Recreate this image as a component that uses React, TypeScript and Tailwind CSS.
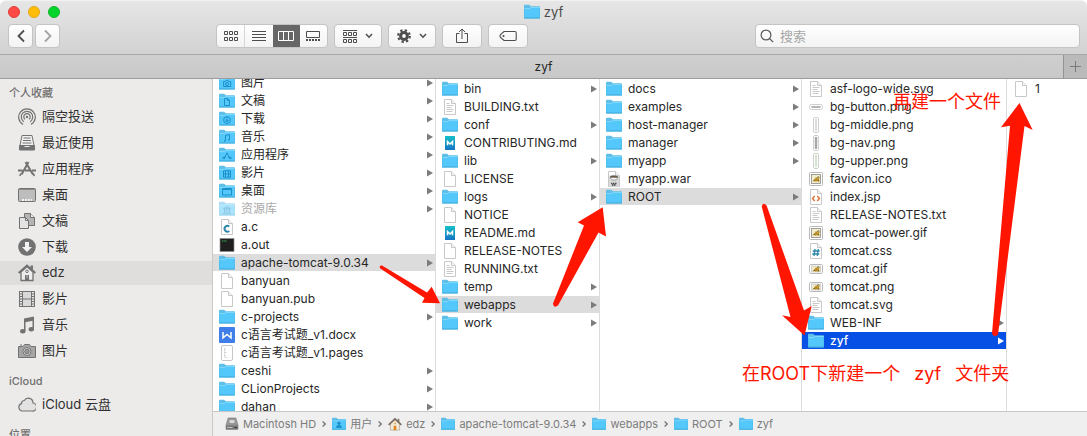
import React from "react";

type IconKind =
  | "folder" | "f-camera" | "f-doc" | "f-download" | "f-music" | "f-apps" | "f-film" | "f-desktop" | "f-library" | "f-user"
  | "c" | "exec" | "blank" | "text" | "word" | "pages" | "md" | "jar" | "hbar" | "vbar" | "vbar-dark" | "vbar-green"
  | "pic" | "pic-wide" | "jsp" | "css" | "drive" | "house";

const Page = ({ children }: { children?: React.ReactNode }) => (
  <g>
    <path d="M2.5.5h7l4 4v11h-11z" fill="#fff" stroke="#c8c8c8" />
    <path d="M9.5.5v4h4" fill="#f4f4f4" stroke="#c8c8c8" />
    {children}
  </g>
);

const folderGlyphs: Record<string, React.ReactNode> = {
  "f-camera": <><path d="M4.5 6.5h2l.6-1h2l.6 1h2v5h-7z" /><circle cx="8" cy="9" r="1.5" /></>,
  "f-doc": <path d="M5.5 5.5h3l2 2v5h-5zM8.5 5.5v2h2" />,
  "f-download": <><circle cx="8" cy="9" r="3.4" /><path d="M8 6.5v4M6.2 9L8 10.8 9.8 9" /></>,
  "f-music": <><path d="M6.5 11.5v-5l4-1v5" /><path d="M5.2 11.8h1.3M9.2 10.8h1.3" strokeWidth="1.8" /></>,
  "f-apps": <path d="M5 12.2l3-6.4 3 6.4M3.5 10.3h3.2M9.3 10.3h3.2M3.6 12l.7-1M12.4 12l-.7-1" />,
  "f-film": <path d="M4.5 5.8h7v6.4h-7zM4.5 9h7M6.5 5.8v6.4M9.5 5.8v6.4" />,
  "f-desktop": <path d="M3.5 5.5h9v6.5h-9zM3.5 6.5h9" />,
  "f-library": <path d="M4.5 7.8L8 5.5l3.5 2.3zM5.5 8v3.5M8 8v3.5M10.5 8v3.5M4 12.3h8" />,
  "f-user": <><circle cx="8" cy="7.2" r="1.4" fill="#1a8fc9" /><path d="M5.2 12c.2-2 1.2-2.5 2.8-2.5s2.6.5 2.8 2.5z" fill="#1a8fc9" /></>,
};

function FileIcon({ kind, className = "size-4" }: { kind: IconKind; className?: string }) {
  let body: React.ReactNode = null;
  if (kind.startsWith("f")) {
    body = (
      <g opacity={kind === "f-library" ? 0.5 : 1}>
        <path d="M0 3.200V1.700q0-.9.9-.9h4q.5 0 .9.5l.9.900H15q1 0 1 .9V6H0z" fill="#5fbfe8" />
        <path d="M0 4h5.600l1.200-1H16V13.800q0 .7-.7.7H.7Q0 14.500 0 13.800z" fill="#55c8fb" />
        <path d="M0 4.500h5.800l1.200-1H16" fill="none" stroke="#8bdafc" strokeWidth=".8" />
        <path d="M.2 14h15.600" stroke="#3aa6d3" strokeWidth=".9" />
        <path d="M.3 4v10M15.700 4v10" stroke="#4ab3de" strokeWidth=".5" />
        <g fill="none" stroke="#1a8fc9" strokeWidth="1">{folderGlyphs[kind]}</g>
      </g>
    );
  } else if (kind === "blank") body = <Page />;
  else if (kind === "text") body = <Page><path d="M4.500 4.500h3M4.500 6.500h7M4.500 8.500h5M4.500 10.500h7M4.500 12.500h6" stroke="#c9c9c9" /></Page>;
  else if (kind === "c") body = <Page><path d="M10.300 7.500A2.900 2.900 0 1 0 10.300 12" fill="none" stroke="#2d86ab" strokeWidth="1.900" /></Page>;
  else if (kind === "jsp") body = <Page><path d="M6.700 7L4.500 9.500l2.200 2.500M9.300 7l2.200 2.500L9.300 12" fill="none" stroke="#e06a2c" strokeWidth="1.300" /></Page>;
  else if (kind === "css") body = <Page><path d="M7 6l-1 7M10.300 6l-1 7M4.700 8h7M4.300 11h7" stroke="#2d86ab" strokeWidth="1.300" /></Page>;
  else if (kind === "exec")
    body = <><rect x="1" y="1.500" width="14" height="13" fill="#1f1f1f" stroke="#8d8d8d" strokeWidth=".7" /><path d="M3 4h5" stroke="#36b35a" strokeDasharray="1.500 .6" /></>;
  else if (kind === "word")
    body = <><rect width="16" height="16" rx="1" fill="#3f7de8" /><path d="M4 5v5.800L8 7.500l4 3.300V5" fill="none" stroke="#fff" strokeWidth="1.500" /></>;
  else if (kind === "pages")
    body = <><rect x="2.500" y=".5" width="11" height="15" rx="1.500" fill="#fff" stroke="#c6c6c6" /><path d="M5.500 2.500v10M5 4.500h2M5 7.500h3M5 10.500h2M5.500 12.500h3" stroke="#d5d5d5" strokeWidth=".8" fill="none" /></>;
  else if (kind === "md")
    body = (
      <>
        <defs><linearGradient id="mdg" x2="0" y2="1"><stop stopColor="#16c0c8" /><stop offset="1" stopColor="#1673c4" /></linearGradient></defs>
        <rect x="3" y="1" width="10" height="14" fill="url(#mdg)" />
        <path d="M5.500 10.300V6.500L8 9l2.500-2.500v3.800" fill="none" stroke="#fff" strokeWidth="1.500" />
      </>
    );
  else if (kind === "jar")
    body = <Page><path d="M3 4.500h10v11H3z" fill="#d9d9d9" /><ellipse cx="8" cy="6" rx="3.800" ry="1.300" fill="#7a5a3c" stroke="#555" strokeWidth=".6" /><path d="M4.300 6.500c.3 3.500 7 3.500 7.400 0z" fill="#fafafa" stroke="#666" strokeWidth=".6" /><path d="M5 12.500h6M6 14h4" stroke="#4f4f4f" strokeWidth="1.300" strokeDasharray="1.500 .5" /></Page>;
  else if (kind === "hbar")
    body = <><rect x="1.500" y="5.500" width="13" height="5" rx="2" fill="#fff" stroke="#cfcfcf" /><path d="M3.500 8h9" stroke="#b5b5b5" strokeWidth="2" /></>;
  else if (kind === "vbar" || kind === "vbar-dark" || kind === "vbar-green")
    body = <><rect x="5.500" y=".5" width="5" height="15" rx="1.500" fill="#fff" stroke="#cfcfcf" /><path d="M8 2v12" stroke={kind === "vbar" ? "#cdcdcd" : kind === "vbar-dark" ? "#a6a6a6" : "#c5d9bb"} strokeWidth={kind === "vbar-dark" ? 2.4 : 1.4} /></>;
  else if (kind === "pic" || kind === "pic-wide") {
    const tall = kind === "pic";
    body = (
      <>
        <rect x="1.500" y={tall ? 1.5 : 3.5} width="13" height={tall ? 13 : 9} rx="1" fill="#fff" stroke="#b9b9b9" />
        <rect x="3.500" y={tall ? 3.5 : 5} width="9" height={tall ? 9 : 6} fill="#f2eccb" stroke={tall ? "#8a8a8a" : "#c9c9c9"} strokeWidth=".8" />
        <path d="M4.500 10.500l2-2 1.500-2.500 1.500 1.500L12 5.500l-1 3 .8 2-2-.8-2 1-1.500-.6z" fill="#bb8f24" />
        <path d="M9 6.500l2-.8M5.500 9.500l1.500-.5M9.500 10h1.500" stroke="#4b4118" strokeWidth=".8" />
      </>
    );
  } else if (kind === "drive")
    body = <><path d="M3.500 1h9L15 9.500H1z" fill="#9a9a9a" stroke="#777" strokeWidth=".6" /><ellipse cx="8" cy="5.200" rx="3.800" ry="2.600" fill="#d9d9d9" stroke="#666" strokeWidth=".6" /><rect x=".8" y="9.500" width="14.400" height="5" rx=".8" fill="#777" /><path d="M2.500 12h6" stroke="#ccc" /><path d="M11 12h2.500" stroke="#333" strokeWidth="1.200" /></>;
  else if (kind === "house")
    body = <><path d="M2.800 8v7h10.400V8L8 3.500z" fill="#f2ead8" stroke="#9b8c76" strokeWidth=".6" /><path d="M11 2h2v4h-2z" fill="#8d7f6e" /><path d="M.7 9L8 2l7.300 7" fill="none" stroke="#746a60" strokeWidth="1.700" /><path d="M6.500 10h3v5h-3z" fill="#df851f" /><circle cx="8" cy="7.300" r="1" fill="#e0a04d" /></>;
  return <svg viewBox="0 0 16 16" className={`${className} shrink-0`} aria-hidden="true">{body}</svg>;
}

type Item = { name: string; icon: IconKind; dir?: boolean; state?: "path" | "active"; dim?: boolean };
const dir = (name: string, icon: IconKind = "folder"): Item => ({ name, icon, dir: true });
const file = (name: string, icon: IconKind = "blank"): Item => ({ name, icon });

const home: Item[] = [
  dir("图片", "f-camera"), dir("文稿", "f-doc"), dir("下载", "f-download"), dir("音乐", "f-music"),
  dir("应用程序", "f-apps"), dir("影片", "f-film"), dir("桌面", "f-desktop"),
  { ...dir("资源库", "f-library"), dim: true },
  file("a.c", "c"), file("a.out", "exec"),
  { ...dir("apache-tomcat-9.0.34"), state: "path" },
  file("banyuan"), file("banyuan.pub"), dir("c-projects"),
  file("c语言考试题_v1.docx", "word"), file("c语言考试题_v1.pages", "pages"),
  dir("ceshi"), dir("CLionProjects"), dir("dahan"),
];
const tomcat: Item[] = [
  dir("bin"), file("BUILDING.txt", "text"), dir("conf"), file("CONTRIBUTING.md", "md"), dir("lib"),
  file("LICENSE"), dir("logs"), file("NOTICE"), file("README.md", "md"), file("RELEASE-NOTES"),
  file("RUNNING.txt", "text"), dir("temp"), { ...dir("webapps"), state: "path" }, dir("work"),
];
const webapps: Item[] = [
  dir("docs"), dir("examples"), dir("host-manager"), dir("manager"), dir("myapp"),
  file("myapp.war", "jar"), { ...dir("ROOT"), state: "path" },
];
const root: Item[] = [
  file("asf-logo-wide.svg", "text"), file("bg-button.png", "hbar"), file("bg-middle.png", "vbar"),
  file("bg-nav.png", "vbar-dark"), file("bg-upper.png", "vbar-green"), file("favicon.ico", "pic"),
  file("index.jsp", "jsp"), file("RELEASE-NOTES.txt", "text"), file("tomcat-power.gif", "pic"),
  file("tomcat.css", "css"), file("tomcat.gif", "pic-wide"), file("tomcat.png", "pic-wide"),
  file("tomcat.svg", "text"), dir("WEB-INF"), { ...dir("zyf"), state: "active" },
];

function Column({ items, className, listClass = "pt-px" }: { items: Item[]; className: string; listClass?: string }) {
  return (
    <div className={`overflow-hidden ${className}`}>
      <ul className={`flex flex-col gap-px ${listClass}`}>
        {items.map((it) => {
          const tone =
            it.state === "active" ? "bg-[#0650e6] font-medium text-white" : it.state === "path" ? "bg-[#dcdcdc] text-[#262626]" : it.dim ? "text-[#a9a9a9]" : "text-[#262626]";
          return (
            <li key={it.name}>
              <button type="button" className={`flex h-[17px] w-full items-center gap-1.5 pr-0.5 pl-1.5 text-left text-xs whitespace-nowrap ${tone}`}>
                <FileIcon kind={it.icon} />
                <span className="flex-1">{it.name}</span>
                {it.dir && (
                  <svg viewBox="0 0 6 8" className="h-2 w-1.5 shrink-0" aria-hidden="true">
                    <path d="M0 .5L6 4 0 7.500z" fill={it.state === "active" ? "#fff" : "#7c7c7c"} />
                  </svg>
                )}
              </button>
            </li>
          );
        })}
      </ul>
    </div>
  );
}

const sideIcons: Record<string, React.ReactNode> = {
  airdrop: (
    <g fill="none" stroke="#727272" strokeWidth="1.200">
      <path d="M5 16.400A8.300 8.300 0 1 1 13 16.400" /><path d="M5.800 13.700A5.700 5.700 0 1 1 12.200 13.700" /><path d="M6.900 11.300A3.200 3.200 0 1 1 11.100 11.300" />
      <circle cx="9" cy="9" r="1.200" fill="#727272" stroke="none" />
    </g>
  ),
  recent: (
    <g stroke="#727272" fill="none">
      <path d="M4 1.500h10l2 10H2z" fill="#f1f1f1" /><path d="M5.500 4h7M5 6.500h8M4.500 9h9" />
      <path d="M1.500 11.500h4l1 2h5l1-2h4v4.500h-15z" fill="#727272" />
    </g>
  ),
  apps: (
    <g stroke="#727272" strokeWidth="2" fill="none">
      <path d="M10.500 2L3.500 14.500M7.500 2l7.500 12.500M0 10.500h4.500M7 10.500h5M14 10.500h4" /><path d="M2.800 13.500l-1 2.500M15 13.500l1.500 2.500" strokeWidth="1.500" />
    </g>
  ),
  desktop: (
    <g stroke="#727272">
      <rect x=".5" y="2.500" width="17" height="13" rx="1" fill="#bdbdbd" /><path d="M1 3.500h16" stroke="#8d8d8d" />
      <path d="M4 14h10" stroke="#f3f3f3" strokeWidth="2" strokeDasharray="2 1" />
    </g>
  ),
  docs: (
    <g stroke="#727272">
      <path d="M6.500 1.500h6l4 4v8h-10z" fill="#b4b4b4" /><path d="M12.500 1.500v4h4" fill="#eee" />
      <path d="M1.500 5.500h6l3 3v8h-9z" fill="#e3e3e3" /><path d="M7.500 5.500v3h3" fill="none" />
    </g>
  ),
  download: (
    <g><circle cx="9" cy="9" r="8.800" fill="#727272" /><path d="M7 4h4v5h3l-5 5-5-5h3z" fill="#f3f3f3" /></g>
  ),
  home: (
    <g>
      <path d="M12.500 1.500H15v4h-2.500z" fill="#727272" /><path d="M3 8v8.500h12V8L9 2.500z" fill="#ececec" stroke="#727272" strokeWidth="1.300" />
      <path d="M.7 9L9 1.500 17.300 9" fill="none" stroke="#727272" strokeWidth="2" /><path d="M7 11h4v5.500H7z" fill="#727272" /><path d="M9 11v3" stroke="#bbb" />
      <circle cx="9" cy="7.300" r="1.300" fill="none" stroke="#727272" />
    </g>
  ),
  film: (
    <g>
      <path d="M1 1h16v16H1z" fill="#727272" /><path d="M5 2h8v6.500H5zM5 9.500h8V16H5z" fill="#d9d9d9" />
      <path d="M3 2v14M15 2v14" stroke="#f3f3f3" strokeWidth="1.800" strokeDasharray="1.500 1" />
    </g>
  ),
  music: (
    <g fill="#727272"><path d="M6 2.500L16 .5v4L6 6.500z" /><path d="M6 4h1.500v11H6zM14.500 2H16v11h-1.500z" /><ellipse cx="4.800" cy="15.300" rx="2.700" ry="2.200" /><ellipse cx="13.300" cy="13.300" rx="2.700" ry="2.200" /></g>
  ),
  camera: (
    <g stroke="#727272"><path d="M.5 4.500h4.500l1.500-2h5l1.500 2h4.500v11H.5z" fill="#a5a5a5" /><circle cx="9" cy="9.500" r="4" fill="#ddd" /><circle cx="9" cy="9.500" r="2.300" fill="#999" /><path d="M2 3h2" /></g>
  ),
  cloud: (
    <path d="M4.500 15a3.800 3.800 0 0 1-1-7.400A2.800 2.800 0 0 1 6.300 4.500a4.700 4.700 0 0 1 8.700 2.500 4 4 0 0 1-1 8z" fill="#e2e2e2" stroke="#727272" strokeWidth="1.200" />
  ),
};

const favourites = [
  ["airdrop", "隔空投送"], ["recent", "最近使用"], ["apps", "应用程序"], ["desktop", "桌面"], ["docs", "文稿"],
  ["download", "下载"], ["home", "edz"], ["film", "影片"], ["music", "音乐"], ["camera", "图片"],
];

function SideLink({ icon, label, active = false }: { icon: string; label: string; active?: boolean }) {
  return (
    <a href="#" className={`flex h-6 shrink-0 items-center gap-1.5 pl-[18px] text-[13px] text-[#303030] ${active ? "bg-[#dfdedd]" : ""}`}>
      <svg viewBox="0 0 18 18" className="size-[18px] shrink-0" aria-hidden="true">{sideIcons[icon]}</svg>
      {label}
    </a>
  );
}

function SideHeading({ children }: { children: React.ReactNode }) {
  return <h2 className="h-5 shrink-0 pl-[9px] text-[11px] leading-4 font-medium text-[#6f6f6f]">{children}</h2>;
}

function Sidebar() {
  return (
    <nav aria-label="边栏" className="flex w-[213px] shrink-0 flex-col gap-2.5 overflow-hidden border-r border-[#c9c9c9] bg-[#ecebea] pt-1.5">
      <section>
        <SideHeading>个人收藏</SideHeading>
        <div className="flex flex-col gap-0.5">
          {favourites.map(([icon, label]) => <SideLink key={label} icon={icon} label={label} active={label === "edz"} />)}
        </div>
      </section>
      <section>
        <SideHeading>iCloud</SideHeading>
        <SideLink icon="cloud" label="iCloud 云盘" />
      </section>
      <section>
        <SideHeading>位置</SideHeading>
      </section>
    </nav>
  );
}

const face = "border border-[#c4c4c4] bg-linear-to-b from-white to-[#f3f3f3]";

function ToolButton({ label, className, children }: { label: string; className: string; children: React.ReactNode }) {
  return (
    <button type="button" aria-label={label} className={`flex h-6 items-center justify-center rounded ${face} ${className}`}>
      {children}
    </button>
  );
}

const GridGlyph = () => (
  <svg viewBox="0 0 14 10" className="h-2.5 w-3.5" fill="none" stroke="#4d4d4d" aria-hidden="true">
    <path d="M.5.5h3v3h-3zM5.500.5h3v3h-3zM10.500.5h3v3h-3zM.5 6.500h3v3h-3zM5.500 6.500h3v3h-3zM10.500 6.500h3v3h-3z" />
  </svg>
);
const Down = () => (
  <svg viewBox="0 0 8 6" className="h-1.5 w-2" fill="none" stroke="#4d4d4d" strokeWidth="1.500" aria-hidden="true"><path d="M1 1l3 3.200L7 1" /></svg>
);

function Toolbar() {
  return (
    <div className="flex items-center pr-[7px] pl-2">
      <div className="flex gap-0.5">
        <ToolButton label="后退" className="w-[25px]">
          <svg viewBox="0 0 8 14" className="h-3.5 w-2" fill="none" stroke="#4d4d4d" strokeWidth="1.800" aria-hidden="true"><path d="M7 1.500L1.500 7 7 12.500" /></svg>
        </ToolButton>
        <ToolButton label="前进" className="w-[25px]">
          <svg viewBox="0 0 8 14" className="h-3.5 w-2" fill="none" stroke="#a3a3a3" strokeWidth="1.800" aria-hidden="true"><path d="M1 1.500L6.500 7 1 12.500" /></svg>
        </ToolButton>
      </div>
      <div className={`ml-[156px] flex h-6 w-[112px] overflow-hidden rounded ${face}`}>
        <button type="button" aria-label="图标" className="flex flex-1 items-center justify-center border-r border-[#d5d5d5]"><GridGlyph /></button>
        <button type="button" aria-label="列表" className="flex flex-1 items-center justify-center">
          <svg viewBox="0 0 14 10" className="h-2.5 w-3.5" stroke="#4d4d4d" aria-hidden="true"><path d="M0 .5h14M0 3.500h14M0 6.500h14M0 9.500h14" /></svg>
        </button>
        <button type="button" aria-label="分栏" className="flex flex-1 items-center justify-center bg-[#676767]">
          <svg viewBox="0 0 16 10" className="h-2.5 w-4" fill="none" stroke="#fff" aria-hidden="true"><path d="M.5.5h15v9H.5zM5.500 1v8M10.500 1v8" /></svg>
        </button>
        <button type="button" aria-label="画廊" className="flex flex-1 items-center justify-center">
          <svg viewBox="0 0 14 10" className="h-2.5 w-3.5" fill="none" stroke="#4d4d4d" aria-hidden="true"><path d="M.5.5h13v6H.5z" /><path d="M0 9h14" strokeWidth="2" strokeDasharray="2 1" /></svg>
        </button>
      </div>
      <ToolButton label="分组" className="ml-1.5 w-12 gap-2">
        <svg viewBox="0 0 14 13" className="h-[13px] w-3.5" fill="none" stroke="#4d4d4d" aria-hidden="true">
          <path d="M0 .5h14M.5 2.500h3v3h-3zM5.500 2.500h3v3h-3zM10.500 2.500h3v3h-3zM0 7.500h14M.5 9.500h3v3h-3zM5.500 9.500h3v3h-3zM10.500 9.500h3v3h-3z" />
        </svg>
        <Down />
      </ToolButton>
      <ToolButton label="操作" className="ml-1.5 w-12 gap-2">
        <svg viewBox="0 0 14 14" className="size-3.5" fill="none" stroke="#4d4d4d" aria-hidden="true">
          <circle cx="7" cy="7" r="3.400" strokeWidth="3" /><circle cx="7" cy="7" r="5.800" strokeWidth="2.200" strokeDasharray="2.300 2.255" />
        </svg>
        <Down />
      </ToolButton>
      <ToolButton label="共享" className="ml-1.5 w-10">
        <svg viewBox="0 0 12 16" className="h-4 w-3" fill="none" stroke="#4d4d4d" aria-hidden="true"><path d="M3.500 5.500h-3v9h11v-9h-3M6 11V1M3 4l3-3 3 3" /></svg>
      </ToolButton>
      <ToolButton label="标签" className="ml-1.5 w-10">
        <svg viewBox="0 0 18 12" className="h-3 w-[18px]" fill="none" stroke="#4d4d4d" strokeWidth="1.100" aria-hidden="true"><path d="M5 1.500h11q1.200 0 1.200 1.200v6.600q0 1.200-1.200 1.200H5L1.500 7.500Q.5 6 1.500 4.500z" /><circle cx="4.500" cy="6" r=".5" /></svg>
      </ToolButton>
      <label className={`ml-auto flex h-6 w-[325px] items-center gap-1.5 rounded px-1 ${face}`}>
        <svg viewBox="0 0 14 14" className="size-3.5 shrink-0" fill="none" stroke="#5a5a5a" strokeWidth="1.200" aria-hidden="true"><circle cx="6" cy="6" r="4.900" /><path d="M9.500 9.500l3.700 3.700" /></svg>
        <input type="search" aria-label="搜索" placeholder="搜索" className="w-full min-w-0 bg-transparent text-[13px] leading-5 outline-none placeholder:text-[#a6a6a6]" />
      </label>
    </div>
  );
}

const crumbs: [IconKind, string][] = [
  ["drive", "Macintosh HD"], ["f-user", "用户"], ["house", "edz"], ["folder", "apache-tomcat-9.0.34"],
  ["folder", "webapps"], ["folder", "ROOT"], ["folder", "zyf"],
];

function PathBar() {
  return (
    <ol className="flex h-[25px] shrink-0 items-center gap-1.5 border-t border-[#c6c6c6] bg-[#efefef] pl-3 text-[11px] text-[#7c7c7c]">
      {crumbs.map(([icon, name], i) => (
        <li key={name} className="flex items-center gap-1.5">
          {i > 0 && (
            <svg viewBox="0 0 4 6" className="h-1.5 w-1 shrink-0" fill="none" stroke="#777" strokeWidth="1.300" aria-hidden="true"><path d="M.6.5L3.200 3 .6 5.500" /></svg>
          )}
          <a href="#" className="flex items-center gap-1 whitespace-nowrap"><FileIcon kind={icon} className="size-3.5" />{name}</a>
        </li>
      ))}
    </ol>
  );
}

function Annotations() {
  return (
    <div className="pointer-events-none absolute inset-0 text-lg leading-6 whitespace-nowrap text-[#ff1500]">
      <svg width="1087" height="436" viewBox="0 0 1087 436" className="absolute top-0 left-0" fill="#ff1500" aria-hidden="true">
        <path d="M382 265.500L427 292.500 431.700 286.700 440 303.300 422 302.700 424.500 298 380 268.300Q379 265 382 265.500z" />
        <path d="M553 303.500L584 225.500 577.700 222.300 602.700 207.300 606 236.500 598.500 232.500 558 305.500Q553.500 308.500 553 303.500z" />
        <path d="M761.700 206.500L790.500 317 782 315.300 804.500 335.500 811.700 306 804 310.500 766.600 205.500Q763 201.500 761.700 206.500z" />
        <path d="M992 333.500L1010 125.700 1001 127.300 1019.500 103 1032.700 130 1024.500 126 998 334.500Q994 338 992 333.500z" />
      </svg>
      <p className="absolute top-[90px] left-[893px]">再建一个文件</p>
      <p className="absolute top-[362px] left-[742px] flex gap-3.5"><span>在ROOT下新建一个</span><span>zyf</span><span>文件夹</span></p>
    </div>
  );
}

export default function App() {
  return (
    <div className="relative flex h-screen flex-col overflow-hidden bg-white font-['Inter','Noto_Sans_CJK_SC',sans-serif]">
      <header className="shrink-0 rounded-t-md border-t border-b border-t-[#f2f2f2] border-b-[#a8a8a8] bg-linear-to-b from-[#e6e6e6] to-[#d2d2d2] pb-1.5">
        <div className="grid h-[23px] grid-cols-3 items-center">
          <div className="flex gap-2 pb-0.5 pl-2">
            <button type="button" aria-label="关闭" className="size-3 rounded-full border border-[#e0403a] bg-[#fe4b45]" />
            <button type="button" aria-label="最小化" className="size-3 rounded-full border border-[#e3a512] bg-[#ffbd08]" />
            <button type="button" aria-label="缩放" className="size-3 rounded-full border border-[#12b42a] bg-[#05d52b]" />
          </div>
          <h1 className="flex items-center justify-center gap-1 pb-0.5 text-[13px] leading-4 text-[#4a4a4a]"><FileIcon kind="folder" />zyf</h1>
        </div>
        <Toolbar />
      </header>
      <div className="flex h-6 shrink-0 border-b border-[#9c9c9c] bg-linear-to-b from-[#cfcfcf] to-[#c8c8c8]">
        <button type="button" className="flex-1 pl-6 text-center text-xs text-[#262626]">zyf</button>
        <button type="button" aria-label="新建标签页" className="flex w-6 items-center justify-center border-l border-[#939393] bg-[#bababa]">
          <svg viewBox="0 0 11 11" className="size-[11px]" stroke="#7a7a7a" aria-hidden="true"><path d="M5.500 0v11M0 5.500h11" /></svg>
        </button>
      </div>
      <div className="flex min-h-0 flex-1">
        <Sidebar />
        <main className="flex min-w-0 flex-1 flex-col">
          <div className="flex min-h-0 flex-1">
            <Column items={home} className="w-[223px] shrink-0 border-r border-[#dcdcdc]" listClass="-mt-[5px]" />
            <Column items={tomcat} className="w-[164px] shrink-0 border-r border-[#dcdcdc]" />
            <Column items={webapps} className="w-[202px] shrink-0 border-r border-[#dcdcdc]" />
            <Column items={root} className="w-[205px] shrink-0 border-r border-[#dcdcdc]" />
            <Column items={[file("1")]} className="min-w-0 flex-1" />
          </div>
          <PathBar />
        </main>
      </div>
      <Annotations />
    </div>
  );
}
